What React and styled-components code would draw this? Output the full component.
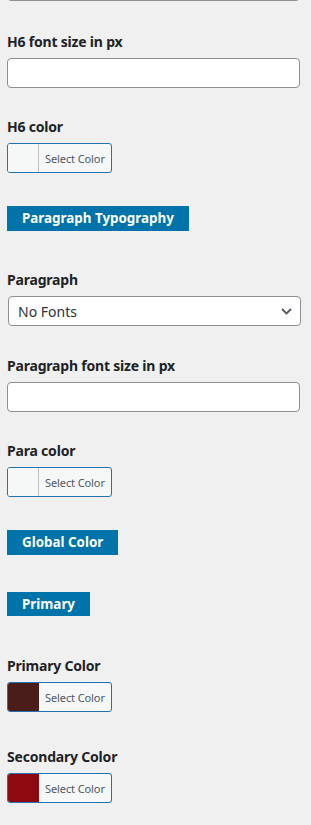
import React from 'react'
import styled, { createGlobalStyle } from 'styled-components'

const GlobalStyle = createGlobalStyle`
  html, body {
    margin: 0;
    padding: 0;
    background: #f0f0f1;
  }
  body {
    font-family: "Noto Sans", "Open Sans", sans-serif;
    color: #1d2327;
  }
`

const Panel = styled.main`
  width: 311px;
  box-sizing: border-box;
  padding: 0 11px 30px 7px;
  overflow: hidden;
`

const Control = styled.section`
  display: flex;
  flex-direction: column;
  align-items: flex-start;
  margin-bottom: ${p => p.gap}px;
`

const Title = styled.label`
  display: block;
  font-size: 14px;
  font-weight: 700;
  line-height: 25px;
  margin-bottom: 4px;
  letter-spacing: -0.2px;
`

const TextInput = styled.input`
  display: block;
  box-sizing: border-box;
  width: 293px;
  height: 30px;
  margin: 0;
  padding: 0 8px;
  border: 1px solid #8c8f94;
  border-radius: 4px;
  background: #fff;
  font: inherit;
  font-size: 14px;
  outline: none;
`

const TopInput = styled(TextInput)`
  margin-top: -29px;
  margin-bottom: 28px;
`

const SelectBox = styled.div`
  box-sizing: border-box;
  width: 293px;
  height: 30px;
  margin-left: 1px;
  display: flex;
  align-items: center;
  justify-content: space-between;
  padding: 0 8px 0 9px;
  border: 1px solid #8c8f94;
  border-radius: 4px;
  background: #fff;
  font-size: 14px;
  color: #2c3338;
`

const ColorButton = styled.button`
  box-sizing: border-box;
  display: flex;
  align-items: stretch;
  width: 105px;
  height: 30px;
  padding: 0;
  border: 1px solid #2271b1;
  border-radius: 3px;
  background: #f6f7f7;
  overflow: hidden;
  cursor: pointer;
`

const Swatch = styled.span`
  width: 30px;
  flex: none;
  background: ${p => p.color || '#f6f7f7'};
  border-right: 1px solid ${p => (p.color ? p.color : '#c3c4c7')};
`

const SwatchText = styled.span`
  display: flex;
  align-items: center;
  padding: 0 6px;
  font-family: "Noto Sans", "Open Sans", sans-serif;
  font-size: 11px;
  color: #50575e;
  letter-spacing: -0.1px;
`

const SectionHeading = styled.h3`
  display: inline-block;
  align-self: flex-start;
  margin: 0;
  padding: 0 15px;
  height: ${p => p.h || 25}px;
  line-height: ${p => p.h || 25}px;
  background: #0073aa;
  color: #fff;
  font-size: 13.4px;
  font-weight: 700;
`

const Chevron = () => (
  <svg width="11" height="7" viewBox="0 0 11 7" fill="none">
    <path d="M1 1l4.5 4.5L10 1" stroke="#50575e" strokeWidth="1.8" />
  </svg>
)

const ColorControl = ({ label, color, gap }) => (
  <Control gap={gap}>
    <Title>{label}</Title>
    <ColorButton type="button">
      <Swatch color={color} />
      <SwatchText>Select Color</SwatchText>
    </ColorButton>
  </Control>
)

const App = () => (
  <>
    <GlobalStyle />
    <Panel>
      <TopInput type="text" />
      <Control gap={26}>
        <Title>H6 font size in px</Title>
        <TextInput type="text" />
      </Control>
      <ColorControl label="H6 color" gap={33} />
      <Control gap={36}>
        <SectionHeading>Paragraph Typography</SectionHeading>
      </Control>
      <Control gap={27}>
        <Title>Paragraph</Title>
        <SelectBox>
          <span>No Fonts</span>
          <Chevron />
        </SelectBox>
      </Control>
      <Control gap={26}>
        <Title>Paragraph font size in px</Title>
        <TextInput type="text" />
      </Control>
      <ColorControl label="Para color" gap={33} />
      <Control gap={37}>
        <SectionHeading>Global Color</SectionHeading>
      </Control>
      <Control gap={37}>
        <SectionHeading h={24}>Primary</SectionHeading>
      </Control>
      <ColorControl label="Primary Color" color="#4a1c1a" gap={32} />
      <ColorControl label="Secondary Color" color="#8f0910" gap={20} />
    </Panel>
  </>
)

export default App
